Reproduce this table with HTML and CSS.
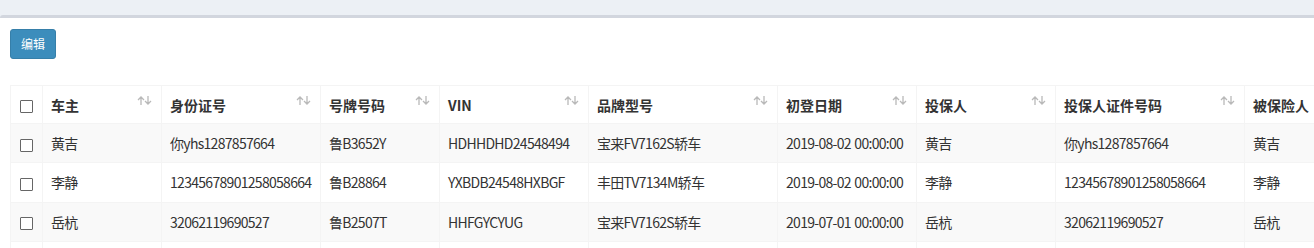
FILE: index.html
```html
<!DOCTYPE html>
<html lang="zh-CN">
<head>
<meta charset="utf-8">
<title>车辆列表</title>
<link rel="stylesheet" href="styles.css">
</head>
<body>
<div class="box">
  <div class="toolbar">
    <button class="btn">编辑</button>
  </div>
  <div class="table-wrap">
    <table class="grid">
      <colgroup>
        <col class="c-check">
        <col class="c-owner">
        <col class="c-id">
        <col class="c-plate">
        <col class="c-vin">
        <col class="c-brand">
        <col class="c-date">
        <col class="c-holder">
        <col class="c-holderid">
        <col class="c-insured">
      </colgroup>
      <thead>
        <tr>
          <th class="chk"><span class="box-check"></span></th>
          <th><div class="th-in"><span>车主</span><svg class="sort" width="15" height="9" viewBox="0 0 15 9"><path d="M4 9V1M1 4l3-3 3 3M11 0v8M8 5l3 3 3-3"/></svg></div></th>
          <th><div class="th-in"><span>身份证号</span><svg class="sort" width="15" height="9" viewBox="0 0 15 9"><path d="M4 9V1M1 4l3-3 3 3M11 0v8M8 5l3 3 3-3"/></svg></div></th>
          <th><div class="th-in"><span>号牌号码</span><svg class="sort" width="15" height="9" viewBox="0 0 15 9"><path d="M4 9V1M1 4l3-3 3 3M11 0v8M8 5l3 3 3-3"/></svg></div></th>
          <th><div class="th-in"><span>VIN</span><svg class="sort" width="15" height="9" viewBox="0 0 15 9"><path d="M4 9V1M1 4l3-3 3 3M11 0v8M8 5l3 3 3-3"/></svg></div></th>
          <th><div class="th-in"><span>品牌型号</span><svg class="sort" width="15" height="9" viewBox="0 0 15 9"><path d="M4 9V1M1 4l3-3 3 3M11 0v8M8 5l3 3 3-3"/></svg></div></th>
          <th><div class="th-in"><span>初登日期</span><svg class="sort" width="15" height="9" viewBox="0 0 15 9"><path d="M4 9V1M1 4l3-3 3 3M11 0v8M8 5l3 3 3-3"/></svg></div></th>
          <th><div class="th-in"><span>投保人</span><svg class="sort" width="15" height="9" viewBox="0 0 15 9"><path d="M4 9V1M1 4l3-3 3 3M11 0v8M8 5l3 3 3-3"/></svg></div></th>
          <th><div class="th-in"><span>投保人证件号码</span><svg class="sort" width="15" height="9" viewBox="0 0 15 9"><path d="M4 9V1M1 4l3-3 3 3M11 0v8M8 5l3 3 3-3"/></svg></div></th>
          <th><div class="th-in"><span>被保险人</span><svg class="sort" width="15" height="9" viewBox="0 0 15 9"><path d="M4 9V1M1 4l3-3 3 3M11 0v8M8 5l3 3 3-3"/></svg></div></th>
        </tr>
      </thead>
      <tbody>
        <tr>
          <td class="chk"><span class="box-check"></span></td>
          <td>黄吉</td>
          <td>你yhs1287857664</td>
          <td>鲁B3652Y</td>
          <td>HDHHDHD24548494</td>
          <td>宝来FV7162S轿车</td>
          <td>2019-08-02 00:00:00</td>
          <td>黄吉</td>
          <td>你yhs1287857664</td>
          <td>黄吉</td>
        </tr>
        <tr>
          <td class="chk"><span class="box-check"></span></td>
          <td>李静</td>
          <td>12345678901258058664</td>
          <td>鲁B28864</td>
          <td>YXBDB24548HXBGF</td>
          <td>丰田TV7134M轿车</td>
          <td>2019-08-02 00:00:00</td>
          <td>李静</td>
          <td>12345678901258058664</td>
          <td>李静</td>
        </tr>
        <tr>
          <td class="chk"><span class="box-check"></span></td>
          <td>岳杭</td>
          <td>32062119690527</td>
          <td>鲁B2507T</td>
          <td>HHFGYCYUG</td>
          <td>宝来FV7162S轿车</td>
          <td>2019-07-01 00:00:00</td>
          <td>岳杭</td>
          <td>32062119690527</td>
          <td>岳杭</td>
        </tr>
        <tr class="row-next">
          <td class="chk"></td>
          <td></td>
          <td></td>
          <td></td>
          <td></td>
          <td></td>
          <td></td>
          <td></td>
          <td></td>
          <td></td>
        </tr>
      </tbody>
    </table>
  </div>
</div>
</body>
</html>
```

FILE: styles.css
```css
html, body {
  margin: 0;
  padding: 0;
  overflow: hidden;
}

body {
  background: #ecf0f5;
  padding-top: 15px;
  font-family: "Noto Sans CJK SC", "Noto Sans", sans-serif;
  font-size: 14px;
  color: #333;
}

.box {
  background: #fff;
  border-top: 3px solid #d2d6de;
  border-radius: 3px 0 0 0;
  min-height: 240px;
}

.toolbar {
  padding: 11px 10px 0 10px;
  display: flex;
}

.btn {
  font-family: "Noto Sans CJK SC", sans-serif;
  font-size: 12px;
  line-height: 18px;
  padding: 5px 10px;
  color: #fff;
  background: #3c8dbc;
  border: 1px solid #367fa9;
  border-radius: 3px;
  box-shadow: none;
}

.table-wrap {
  margin-top: 26px;
  padding-left: 10px;
  overflow: hidden;
}

.grid {
  border-collapse: collapse;
  table-layout: fixed;
  width: 1384px;
  border: 1px solid #f4f4f4;
}

.c-check { width: 32px; }
.c-owner { width: 119px; }
.c-id { width: 159px; }
.c-plate { width: 119px; }
.c-vin { width: 149px; }
.c-brand { width: 189px; }
.c-date { width: 139px; }
.c-holder { width: 139px; }
.c-holderid { width: 189px; }
.c-insured { width: 150px; }

.grid th,
.grid td {
  border: 1px solid #f4f4f4;
  padding: 0 8px;
  text-align: left;
  white-space: nowrap;
  overflow: hidden;
}

.grid th {
  height: 37px;
  font-weight: bold;
  border-bottom-width: 1px;
}

.grid td {
  height: 38.3px;
  line-height: 20px;
  letter-spacing: -0.7px;
  word-spacing: 1px;
}

.grid tbody tr:nth-child(odd) td {
  background: #f9f9f9;
}

.grid .chk {
  padding: 0;
  text-align: center;
}

.box-check {
  display: inline-block;
  width: 11px;
  height: 11px;
  border: 1px solid #666;
  background: #fff;
  vertical-align: middle;
  border-radius: 1px;
}

.th-in {
  display: flex;
  align-items: center;
  justify-content: space-between;
}

.sort {
  flex: none;
  margin-right: 1px;
  margin-top: -8px;
}

.sort path {
  stroke: #b9b9b9;
  stroke-width: 1.3;
  fill: none;
}
```
